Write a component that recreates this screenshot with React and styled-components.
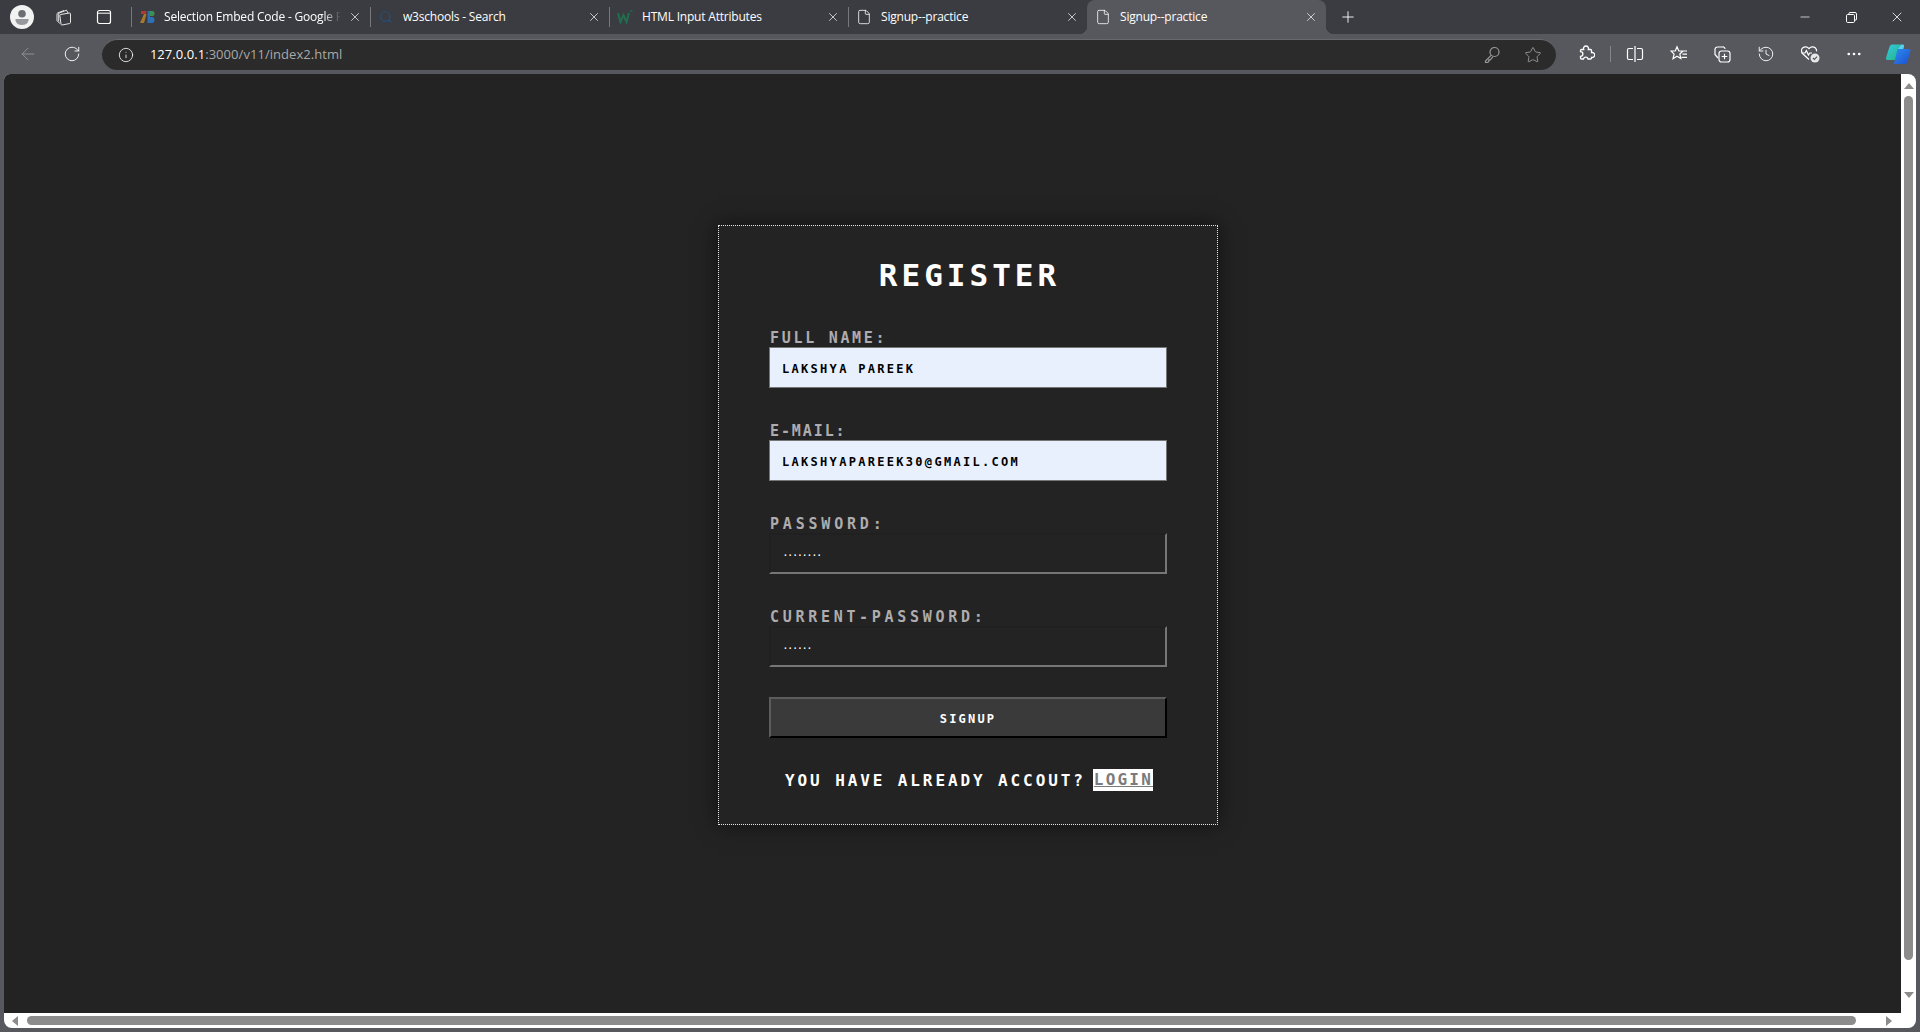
import React from "react";
import styled, { createGlobalStyle } from "styled-components";
import { ArrowLeft, RotateCw, Info, Star, X, Plus, Minus, File, Search, History, MoreHorizontal } from "lucide-react";

const GlobalStyle = createGlobalStyle`
  html, body { margin: 0; padding: 0; height: 100%; overflow: hidden; background: #57585d; }
  * { box-sizing: border-box; }
`;

const pixelFont = `"DejaVu Sans Mono", "Liberation Mono", monospace`;

const Browser = styled.div`
  width: 1920px;
  height: 1032px;
  display: flex;
  flex-direction: column;
  background: #57585d;
  font-family: "Open Sans", "Liberation Sans", sans-serif;
`;
const TabStrip = styled.div`
  height: 34px;
  display: flex;
  align-items: center;
  background: #3b3c41;
  color: #fff;
`;
const StripActions = styled.div`
  display: flex;
  align-items: center;
  gap: 17px;
  padding-left: 10px;
  margin-right: 15px;
`;
const Avatar = styled.div`
  width: 24px;
  height: 24px;
  display: flex;
  align-items: center;
  justify-content: center;
`;
const Tab = styled.div`
  position: relative;
  width: 239px;
  height: 34px;
  display: flex;
  align-items: center;
  padding-left: 8px;
  font-size: 12px;
  letter-spacing: -0.2px;
  background: ${(p) => (p.$active ? "#57585d" : "transparent")};
  border-radius: ${(p) => (p.$active ? "8px 8px 0 0" : "0")};
  &::before {
    content: "";
    position: absolute;
    left: 0;
    top: 7px;
    height: 20px;
    width: 1px;
    background: ${(p) => (p.$plain ? "transparent" : "#77787c")};
  }
`;
const Corner = styled.span`
  position: absolute;
  bottom: 0;
  width: 8px;
  height: 8px;
  ${(p) => (p.$left ? "left: -8px;" : "right: -8px;")}
  background: radial-gradient(circle at ${(p) => (p.$left ? "0 0" : "100% 0")}, transparent 8px, #57585d 8.5px);
`;
const Favicon = styled.span`
  width: 16px;
  height: 16px;
  flex: none;
  display: flex;
  align-items: center;
  justify-content: center;
  margin-right: 9px;
`;
const TabTitle = styled.span`
  flex: 1;
  margin-top: -1px;
  white-space: nowrap;
  overflow: hidden;
  ${(p) => p.$fade && "-webkit-mask-image: linear-gradient(90deg, #000 90%, transparent 100%);"}
`;
const TabClose = styled.span`
  width: 28px;
  display: flex;
  justify-content: center;
  margin-right: 1px;
`;
const NewTab = styled.div`
  margin-left: 13px;
  display: flex;
`;
const WindowControls = styled.div`
  margin-left: auto;
  display: flex;
`;
const WindowButton = styled.div`
  width: 46px;
  height: 34px;
  display: flex;
  align-items: center;
  justify-content: center;
`;
const Toolbar = styled.div`
  height: 40px;
  display: flex;
  align-items: center;
  padding-left: 12px;
  color: #fff;
`;
const NavButton = styled.div`
  width: 32px;
  display: flex;
  justify-content: center;
  margin-right: 12px;
  color: ${(p) => (p.$muted ? "#9a9a9d" : "#fff")};
`;
const AddressBar = styled.div`
  width: 1457px;
  height: 31px;
  margin-left: 2px;
  display: flex;
  align-items: center;
  padding: 0 14px 0 16px;
  border-radius: 16px;
  background: #2b2b2b;
  border-top: 1px solid #68696c;
  color: #a0a0a0;
`;
const Url = styled.div`
  margin-left: 16px;
  margin-top: -2px;
  flex: 1;
  font-size: 13px;
  letter-spacing: 0.05px;
  color: #a9a9a9;
  span { color: #fff; }
`;
const AddressIcon = styled.span`
  display: flex;
  margin-left: 23px;
  color: #9a9a9a;
`;
const ToolSlot = styled.div`
  width: 44px;
  display: flex;
  justify-content: center;
  ${(p) => p.$first && "margin-left: 8px;"}
`;
const ToolDivider = styled.div`
  width: 1px;
  height: 16px;
  margin: 0 2px 0 2px;
  background: #85868a;
`;

const Viewport = styled.div`
  flex: 1;
  margin: 0 4px 4px;
  display: grid;
  grid-template-columns: 1fr 15px;
  grid-template-rows: 1fr 15px;
  background: #fff;
  border-radius: 6px 8px 8px 8px;
  overflow: hidden;
`;
const Page = styled.div`
  background: #232323;
  padding: 151px 0 0 714px;
  overflow: hidden;
`;
const Card = styled.div`
  width: 500px;
  height: 600px;
  border: 1px dotted #e4e4e4;
  padding: 0 50px;
  box-shadow: 0 0 20px rgba(0, 0, 0, 0.55);
  font-family: ${pixelFont};
  font-weight: 700;
`;
const Title = styled.h1`
  margin: 31px 0 0;
  padding-left: 3px;
  text-align: center;
  font-size: 31px;
  line-height: 36px;
  font-weight: 700;
  letter-spacing: 4px;
  color: #fff;
`;
const Form = styled.form`
  margin-top: 36px;
  display: flex;
  flex-direction: column;
`;
const Field = styled.div`
  display: flex;
  flex-direction: column;
  height: 93px;
`;
const Label = styled.label`
  font-size: 15px;
  line-height: 18px;
  height: 18px;
  letter-spacing: ${(p) => p.$tracking}px;
  color: #aeacae;
  padding-left: 1px;
`;
const Input = styled.input`
  width: 398px;
  height: 41px;
  padding: ${(p) => (p.$filled ? "2px 12px 0" : "0 12px")};
  font-family: ${pixelFont};
  font-weight: 700;
  font-size: ${(p) => (p.$filled ? "12px" : "8px")};
  letter-spacing: ${(p) => (p.$filled ? "2.3px" : "0")};
  color: ${(p) => (p.$filled ? "#000" : "#fff")};
  background: ${(p) => (p.$filled ? "#e8f0fe" : "transparent")};
  border-style: solid;
  border-width: ${(p) => (p.$filled ? "1px" : "2px")};
  border-color: ${(p) => (p.$filled ? "#767676" : "#202020 #767676 #767676 #202020")};
  outline: none;
`;
const SubmitButton = styled.button`
  width: 398px;
  height: 41px;
  margin-top: -4px;
  padding: 2px 0 0;
  background: #3a3a3a;
  border: 2px solid;
  border-color: #5c5c5c #000 #000 #5c5c5c;
  color: #fff;
  font-family: ${pixelFont};
  font-weight: 700;
  font-size: 12px;
  letter-spacing: 2.2px;
`;
const Footer = styled.div`
  margin-top: 31px;
  padding-left: 16px;
  display: flex;
  align-items: center;
  gap: 7px;
  font-size: 16px;
  letter-spacing: 2.9px;
  color: #fff;
  white-space: nowrap;
`;
const LoginLink = styled.a`
  display: block;
  width: 60px;
  height: 22px;
  line-height: 21px;
  background: #fff;
  color: #7b7b7b;
  padding-left: 1px;
  font-size: 16px;
  letter-spacing: 2.2px;
  text-decoration: underline;
  overflow: hidden;
`;
const VerticalBar = styled.div`
  display: flex;
  flex-direction: column;
  align-items: center;
  padding: 9px 0 9px;
`;
const HorizontalBar = styled.div`
  display: flex;
  align-items: center;
  padding-left: 8px;
`;
const Thumb = styled.div`
  background: #8c8c8c;
  border-radius: 5px;
  ${(p) => (p.$vertical ? "width: 9px; height: 864px; margin-top: 7px;" : "height: 9px; width: 1829px; margin-left: 9px;")}
`;
const Arrow = styled.span`
  width: 0;
  height: 0;
  ${(p) => p.$dir === "up" && "border: 4px solid transparent; border-top: 0; border-left-width: 5px; border-right-width: 5px; border-bottom: 6px solid #8c8c8c;"}
  ${(p) => p.$dir === "down" && "margin-top: auto; margin-bottom: 6px; border: 4px solid transparent; border-bottom: 0; border-left-width: 5px; border-right-width: 5px; border-top: 6px solid #8c8c8c;"}
  ${(p) => p.$dir === "left" && "border: 5px solid transparent; border-left: 0; border-right: 6px solid #8c8c8c;"}
  ${(p) => p.$dir === "right" && "margin-left: 30px; border: 5px solid transparent; border-right: 0; border-left: 6px solid #8c8c8c;"}
`;

const ProfileIcon = () => (
  <svg width="24" height="24" viewBox="0 0 24 24">
    <circle cx="12" cy="12" r="12" fill="#f2f2f2" />
    <circle cx="12" cy="8.800" r="3.800" fill="#6d6e72" />
    <path d="M5.500 14h13v1.500c-.6 3-3.200 4.500-6.500 4.500s-5.900-1.500-6.500-4.500z" fill="#97989b" />
  </svg>
);
const WorkspacesIcon = () => (
  <svg width="18" height="18" viewBox="0 0 18 18" fill="none" stroke="#e6e6e6" strokeWidth="1">
    <path d="M6.500 6.500 15.500 5a1 1 0 0 1 1 1v8.500a1 1 0 0 1-.8 1l-7.700 1.500a1 1 0 0 1-1-.8l-1.200-9a1 1 0 0 1 .7-.7z" />
    <path d="M6 15.500 3.200 13a1 1 0 0 1-.2-1V6a1 1 0 0 1 .6-1L10 2.500" />
    <path d="M4.700 13.500V5.200L12.500 2.200 14 5" />
  </svg>
);
const TabActionsIcon = () => (
  <svg width="16" height="16" viewBox="0 0 16 16" fill="none" stroke="#fff" strokeWidth="1.200">
    <rect x="1.500" y="1.500" width="13" height="13" rx="2" />
    <path d="M1.500 4.200h13" strokeWidth="1" />
  </svg>
);
const RestoreIcon = () => (
  <svg width="11" height="11" viewBox="0 0 11 11" fill="none" stroke="#fff" strokeWidth="1">
    <rect x="0.500" y="2.500" width="8" height="8" rx="1.200" />
    <path d="M2.800 2V1.800A1.300 1.300 0 0 1 4 .5h5A1.500 1.500 0 0 1 10.500 2v5A1.300 1.300 0 0 1 9 8.200" />
  </svg>
);
const KeyIcon = () => (
  <svg width="18" height="18" viewBox="0 0 18 18" fill="none" stroke="currentColor" strokeWidth="1.200">
    <circle cx="11.500" cy="6" r="4.500" />
    <path d="M8.300 9.200 2.500 15v1.500h2.200l1.100-1.100v-1.600h1.500l2.500-3" />
  </svg>
);
const PuzzleIcon = () => (
  <svg width="18" height="18" viewBox="0 0 18 18" fill="none" stroke="#fff" strokeWidth="1.300">
    <path d="M4.500 4.500h2.200a2.500 2.500 0 1 1 4.600 0h2.200a1 1 0 0 1 1 1v2.100a2.500 2.500 0 1 1 0 4.800v.6a1 1 0 0 1-1 1h-2.500a2.300 2.300 0 0 0-4.500 0H4.500a1 1 0 0 1-1-1v-1.600a2.300 2.300 0 0 0 0-4.800V5.500a1 1 0 0 1 1-1z" />
  </svg>
);
const SplitIcon = () => (
  <svg width="18" height="18" viewBox="0 0 18 18" fill="none" stroke="#fff" strokeWidth="1.200">
    <path d="M7 3.500H3A1.500 1.500 0 0 0 1.500 5v8A1.500 1.500 0 0 0 3 14.500h4M11 3.500h4A1.500 1.500 0 0 1 16.500 5v8a1.500 1.500 0 0 1-1.500 1.500h-4M9 1v16" />
  </svg>
);
const FavoritesIcon = () => (
  <svg width="18" height="18" viewBox="0 0 18 18" fill="none" stroke="#fff" strokeWidth="1.200">
    <path d="M7 1.800 8.800 6H13L9.800 9l1 4.600L7 11.200 3 13.800l1.100-4.600L1 6h4.300zM12 6h5M12.500 9.200H17M11.500 12.400H17" />
  </svg>
);
const CollectionsIcon = () => (
  <svg width="18" height="18" viewBox="0 0 18 18" fill="none" stroke="#fff" strokeWidth="1.200">
    <path d="M5 13 2 9.500V4.500A2.500 2.500 0 0 1 4.500 2h5A2 2 0 0 1 12 4" />
    <rect x="6" y="6" width="11" height="11" rx="2.500" />
    <path d="M11.500 8.700v5.600M8.700 11.500h5.600" />
  </svg>
);
const HealthIcon = () => (
  <svg width="20" height="18" viewBox="0 0 20 18" fill="none" stroke="#fff" strokeWidth="1.200">
    <path d="M9 14.500 3 9C1 7 1 4.200 2.800 2.800 4.800 1.200 7.500 1.600 9 3.600c1.500-2 4.200-2.400 6.200-.8 1.200 1 1.600 2.400 1.400 3.600" />
    <path d="M1.500 8h3.500l1.400-2.500L8.400 10l1.400-2H12" />
    <circle cx="15" cy="13" r="4.500" fill="#e8e8e8" stroke="none" />
    <path d="m12.900 13 1.500 1.500 2.700-2.800" stroke="#57585d" />
  </svg>
);
const CopilotIcon = () => (
  <svg width="26" height="26" viewBox="0 0 26 26">
    <defs>
      <linearGradient id="copA" x1="0" y1="0" x2="1" y2="1">
        <stop offset="0" stopColor="#36c7e8" />
        <stop offset="1" stopColor="#1fb67c" />
      </linearGradient>
      <linearGradient id="copB" x1="0" y1="0" x2="1" y2="1">
        <stop offset="0" stopColor="#2e8cf0" />
        <stop offset="1" stopColor="#1b4fd0" />
      </linearGradient>
    </defs>
    <path d="M7 3.500h9.500l-3.800 13.500c-.4 1.300-1.300 2-2.600 2H2.200c-1.400 0-1.600-1-1-2.700L4.400 6C5 4.400 5.800 3.500 7 3.500z" fill="url(#copA)" />
    <path d="M12.500 8h11.200c1.500 0 2.100 1 1.600 2.700l-2.900 10c-.5 1.500-1.400 2.300-2.800 2.300H9l3.500-15z" fill="url(#copB)" />
    <path d="M16.500 3.500h1c1.300 0 1.900.8 1.500 2L18.300 8H13z" fill="#5ad0f0" />
  </svg>
);
const ColorBlocksIcon = () => (
  <svg width="16" height="16" viewBox="0 0 16 16">
    <path d="M1 14 5 5h2.500L5 14z" fill="#a8792a" />
    <path d="M2 2h5.500L6.500 5H2z" fill="#b3382f" />
    <path d="M8.500 2H11v12H8.500z" fill="#2f6fb3" />
    <path d="M11 2h2.500a2 2 0 0 1 2 2v1a2 2 0 0 1-2 2H11z" fill="#3d8f54" />
    <path d="M11 8h2.500a2.500 2.500 0 0 1 2 2.500v1a2.500 2.500 0 0 1-2 2.500H11z" fill="#2f6fb3" />
  </svg>
);
const W3Icon = () => (
  <svg width="16" height="16" viewBox="0 0 16 16" fill="none" stroke="#1f6f4f" strokeWidth="2">
    <path d="M1 4l2.500 9L6.500 6l3 7L12 4" />
    <path d="M13 2h2.500" strokeWidth="1.200" />
  </svg>
);

const tabs = [
  { id: 1, title: "Selection Embed Code - Google Fonts", icon: <ColorBlocksIcon />, fade: true },
  { id: 2, title: "w3schools - Search", icon: <Search size={14} color="#24507a" /> },
  { id: 3, title: "HTML Input Attributes", icon: <W3Icon /> },
  { id: 4, title: "Signup--practice", icon: <File size={16} strokeWidth={1.2} /> },
  { id: 5, title: "Signup--practice", icon: <File size={16} strokeWidth={1.2} />, active: true },
];

const fields = [
  { id: "name", label: "FULL NAME:", tracking: 2.7, value: "LAKSHYA PAREEK", filled: true },
  { id: "email", label: "E-MAIL:", tracking: 1.9, value: "LAKSHYAPAREEK30@GMAIL.COM", filled: true },
  { id: "password", label: "PASSWORD:", tracking: 3.8, value: "........" },
  { id: "current", label: "CURRENT-PASSWORD:", tracking: 3.7, value: "......" },
];

export default function App() {
  return (
    <Browser>
      <GlobalStyle />
      <TabStrip>
        <StripActions>
          <Avatar><ProfileIcon /></Avatar>
          <Avatar><WorkspacesIcon /></Avatar>
          <Avatar><TabActionsIcon /></Avatar>
        </StripActions>
        {tabs.map((tab) => (
          <Tab key={tab.id} $active={tab.active} $plain={tab.active}>
            {tab.active && <Corner $left />}
            {tab.active && <Corner />}
            <Favicon>{tab.icon}</Favicon>
            <TabTitle $fade={tab.fade}>{tab.title}</TabTitle>
            <TabClose><X size={14} strokeWidth={1.2} /></TabClose>
          </Tab>
        ))}
        <NewTab><Plus size={18} strokeWidth={1.2} /></NewTab>
        <WindowControls>
          <WindowButton><Minus size={14} strokeWidth={1.2} /></WindowButton>
          <WindowButton><RestoreIcon /></WindowButton>
          <WindowButton><X size={16} strokeWidth={1.2} /></WindowButton>
        </WindowControls>
      </TabStrip>
      <Toolbar>
        <NavButton $muted><ArrowLeft size={20} strokeWidth={1} /></NavButton>
        <NavButton><RotateCw size={18} strokeWidth={1.2} /></NavButton>
        <AddressBar>
          <Info size={16} strokeWidth={1.2} color="#fff" />
          <Url><span>127.0.0.1</span>:3000/v11/index2.html</Url>
          <AddressIcon><KeyIcon /></AddressIcon>
          <AddressIcon><Star size={18} strokeWidth={1.2} /></AddressIcon>
        </AddressBar>
        <ToolSlot $first><PuzzleIcon /></ToolSlot>
        <ToolDivider />
        <ToolSlot><SplitIcon /></ToolSlot>
        <ToolSlot><FavoritesIcon /></ToolSlot>
        <ToolSlot><CollectionsIcon /></ToolSlot>
        <ToolSlot><History size={18} strokeWidth={1.2} /></ToolSlot>
        <ToolSlot><HealthIcon /></ToolSlot>
        <ToolSlot><MoreHorizontal size={18} strokeWidth={1.6} /></ToolSlot>
        <ToolSlot><CopilotIcon /></ToolSlot>
      </Toolbar>
      <Viewport>
        <Page>
          <Card>
            <Title>REGISTER</Title>
            <Form onSubmit={(e) => e.preventDefault()}>
              {fields.map((field) => (
                <Field key={field.id}>
                  <Label htmlFor={field.id} $tracking={field.tracking}>{field.label}</Label>
                  <Input id={field.id} readOnly value={field.value} $filled={field.filled} />
                </Field>
              ))}
              <SubmitButton type="submit">SIGNUP</SubmitButton>
            </Form>
            <Footer>
              <span>YOU HAVE ALREADY ACCOUT?</span>
              <LoginLink href="#">LOGIN</LoginLink>
            </Footer>
          </Card>
        </Page>
        <VerticalBar>
          <Arrow $dir="up" />
          <Thumb $vertical />
          <Arrow $dir="down" />
        </VerticalBar>
        <HorizontalBar>
          <Arrow $dir="left" />
          <Thumb />
          <Arrow $dir="right" />
        </HorizontalBar>
        <div />
      </Viewport>
    </Browser>
  );
}
